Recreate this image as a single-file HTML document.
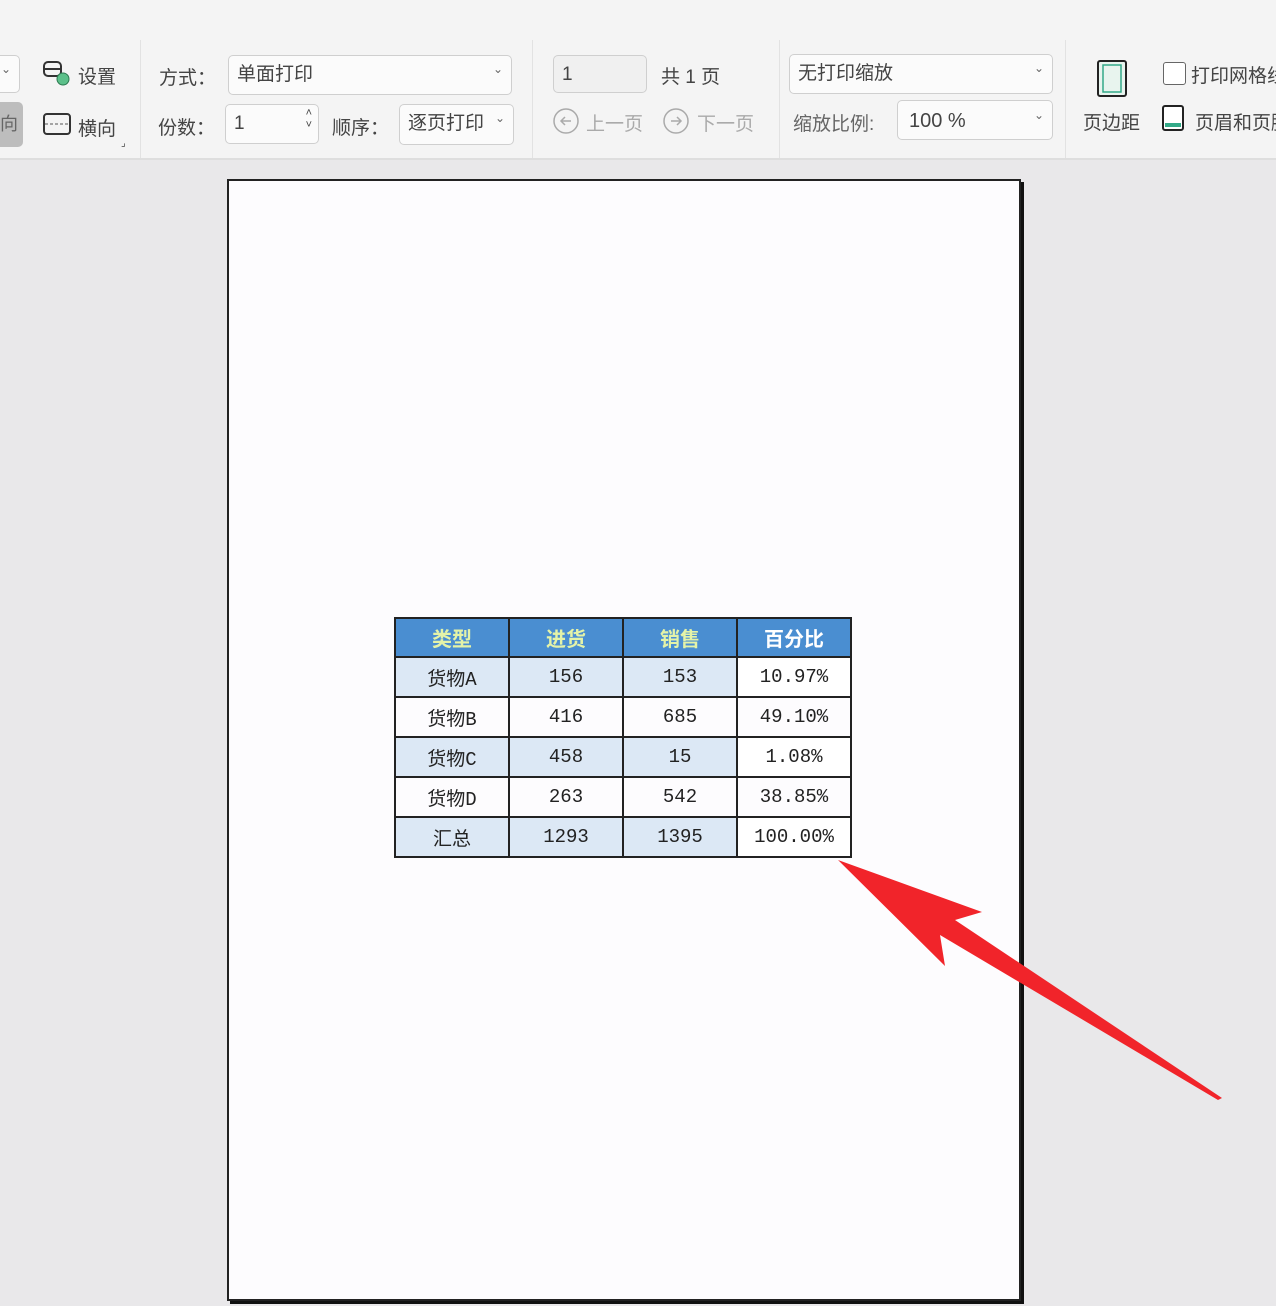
<!DOCTYPE html>
<html><head><meta charset="utf-8"><style>
body{margin:0;width:1276px;height:1306px;background:#e9e8ea;position:relative;overflow:hidden;font-family:"Liberation Sans","Noto Sans CJK SC",sans-serif;color:#333}
.a{position:absolute}
.tb{left:0;top:0;width:1276px;height:158px;background:#f4f4f4;border-bottom:2px solid #dedede}
.box{position:absolute;background:#fbfbfb;border:1px solid #cfcfcf;border-radius:5px;box-sizing:border-box;font-size:19px;padding-left:8px;line-height:38px;color:#444}
.dd:after{content:"⌄";position:absolute;right:8px;top:-6px;font-size:12px;color:#666}
.t{position:absolute;font-size:19px;color:#444;white-space:nowrap}
.g{color:#aaa}
.sep{position:absolute;top:40px;width:1px;height:118px;background:#e2e2e2}
table{position:absolute;left:394px;top:617px;border-collapse:collapse;font-family:"Liberation Mono","Noto Sans CJK SC",monospace}
td{border:2px solid #222;width:112px;text-align:center;font-size:19px;height:38px;padding:0;color:#222}
th{border:2px solid #222;background:#4a8ed1;color:#e4f3a8;font-size:20px;height:37px;padding:0;font-family:"Noto Sans CJK SC",sans-serif}
.l td{background:#dce8f5}
.l td:last-child{background:#fff}
</style></head><body>
<div class="a tb"></div>
<div class="box dd" style="left:-10px;top:55px;width:30px;height:38px"></div>
<div class="a" style="left:0;top:102px;width:23px;height:45px;background:#bdbdbd;border-radius:0 5px 5px 0;font-size:18px;line-height:45px;color:#666">向</div>
<svg class="a" style="left:42px;top:60px" width="30" height="28"><rect x="2" y="2" width="17" height="14" rx="4" fill="none" stroke="#333" stroke-width="2"/><line x1="2" y1="9" x2="19" y2="9" stroke="#333" stroke-width="2"/><circle cx="21" cy="19" r="6" fill="#5cc08a" stroke="#2c7a50"/></svg>
<div class="t" style="left:78px;top:62px">设置</div>
<svg class="a" style="left:43px;top:113px" width="30" height="24"><rect x="1" y="1" width="26" height="20" rx="3" fill="none" stroke="#333" stroke-width="2"/><line x1="2" y1="11" x2="26" y2="11" stroke="#555" stroke-dasharray="3 2"/></svg>
<div class="t" style="left:78px;top:114px">横向</div>
<div class="t" style="left:121px;top:138px;font-size:10px">⌟</div>
<div class="sep" style="left:140px"></div>
<div class="t" style="left:159px;top:63px">方式：</div>
<div class="box dd" style="left:228px;top:55px;width:284px;height:40px">单面打印</div>
<div class="t" style="left:158px;top:113px">份数：</div>
<div class="box" style="left:225px;top:104px;width:94px;height:40px">1<span style="position:absolute;right:6px;top:-8px;font-size:11px;line-height:12px;padding-top:10px">˄<br>˅</span></div>
<div class="t" style="left:332px;top:113px">顺序：</div>
<div class="box dd" style="left:399px;top:104px;width:115px;height:41px">逐页打印</div>
<div class="sep" style="left:532px"></div>
<div class="box" style="left:553px;top:55px;width:94px;height:38px;background:#f0f0f0">1</div>
<div class="t" style="left:661px;top:62px">共 1 页</div>
<svg class="a" style="left:552px;top:107px" width="28" height="28"><circle cx="14" cy="14" r="12" fill="none" stroke="#aaa" stroke-width="1.5"/><path d="M19 14H9M13 10l-4 4 4 4" fill="none" stroke="#aaa" stroke-width="1.5"/></svg>
<div class="t g" style="left:586px;top:109px">上一页</div>
<svg class="a" style="left:662px;top:107px" width="28" height="28"><circle cx="14" cy="14" r="12" fill="none" stroke="#aaa" stroke-width="1.5"/><path d="M9 14h10M15 10l4 4-4 4" fill="none" stroke="#aaa" stroke-width="1.5"/></svg>
<div class="t g" style="left:697px;top:109px">下一页</div>
<div class="sep" style="left:779px"></div>
<div class="box dd" style="left:789px;top:54px;width:264px;height:40px">无打印缩放</div>
<div class="t" style="left:793px;top:109px;color:#666">缩放比例:</div>
<div class="box dd" style="left:897px;top:100px;width:156px;height:40px;line-height:40px;padding-left:11px;font-size:20px">100 %</div>
<div class="sep" style="left:1065px"></div>
<svg class="a" style="left:1096px;top:59px" width="34" height="40"><rect x="2" y="2" width="28" height="35" rx="2" fill="#e8f4ee" stroke="#222" stroke-width="2"/><rect x="7" y="6" width="18" height="27" fill="none" stroke="#3a8" stroke-width="1.5"/></svg>
<div class="t" style="left:1083px;top:108px">页边距</div>
<div class="a" style="left:1163px;top:62px;width:21px;height:21px;border:1.5px solid #666;border-radius:3px;background:#fff"></div>
<div class="t" style="left:1191px;top:61px">打印网格线</div>
<svg class="a" style="left:1162px;top:105px" width="24" height="28"><rect x="1" y="1" width="20" height="24" rx="2" fill="#fff" stroke="#222" stroke-width="2"/><rect x="3" y="18" width="16" height="4" fill="#3a8"/></svg>
<div class="t" style="left:1195px;top:108px">页眉和页脚</div>
<div class="a" style="left:227px;top:179px;width:790px;height:1118px;background:#fdfcfe;border:2px solid #222;box-shadow:3px 3px 0 #111"></div>
<table>
<tr><th>类型</th><th>进货</th><th>销售</th><th style="color:#fff">百分比</th></tr>
<tr class="l"><td>货物A</td><td>156</td><td>153</td><td>10.97%</td></tr>
<tr><td>货物B</td><td>416</td><td>685</td><td>49.10%</td></tr>
<tr class="l"><td>货物C</td><td>458</td><td>15</td><td>1.08%</td></tr>
<tr><td>货物D</td><td>263</td><td>542</td><td>38.85%</td></tr>
<tr class="l"><td>汇总</td><td>1293</td><td>1395</td><td>100.00%</td></tr>
</table>
<svg class="a" style="left:0;top:0" width="1276" height="1306"><polygon points="838,860 982,912 955,920 1222,1098 1218,1100 940,935 945,966" fill="#f1242a"/></svg>
</body></html>
